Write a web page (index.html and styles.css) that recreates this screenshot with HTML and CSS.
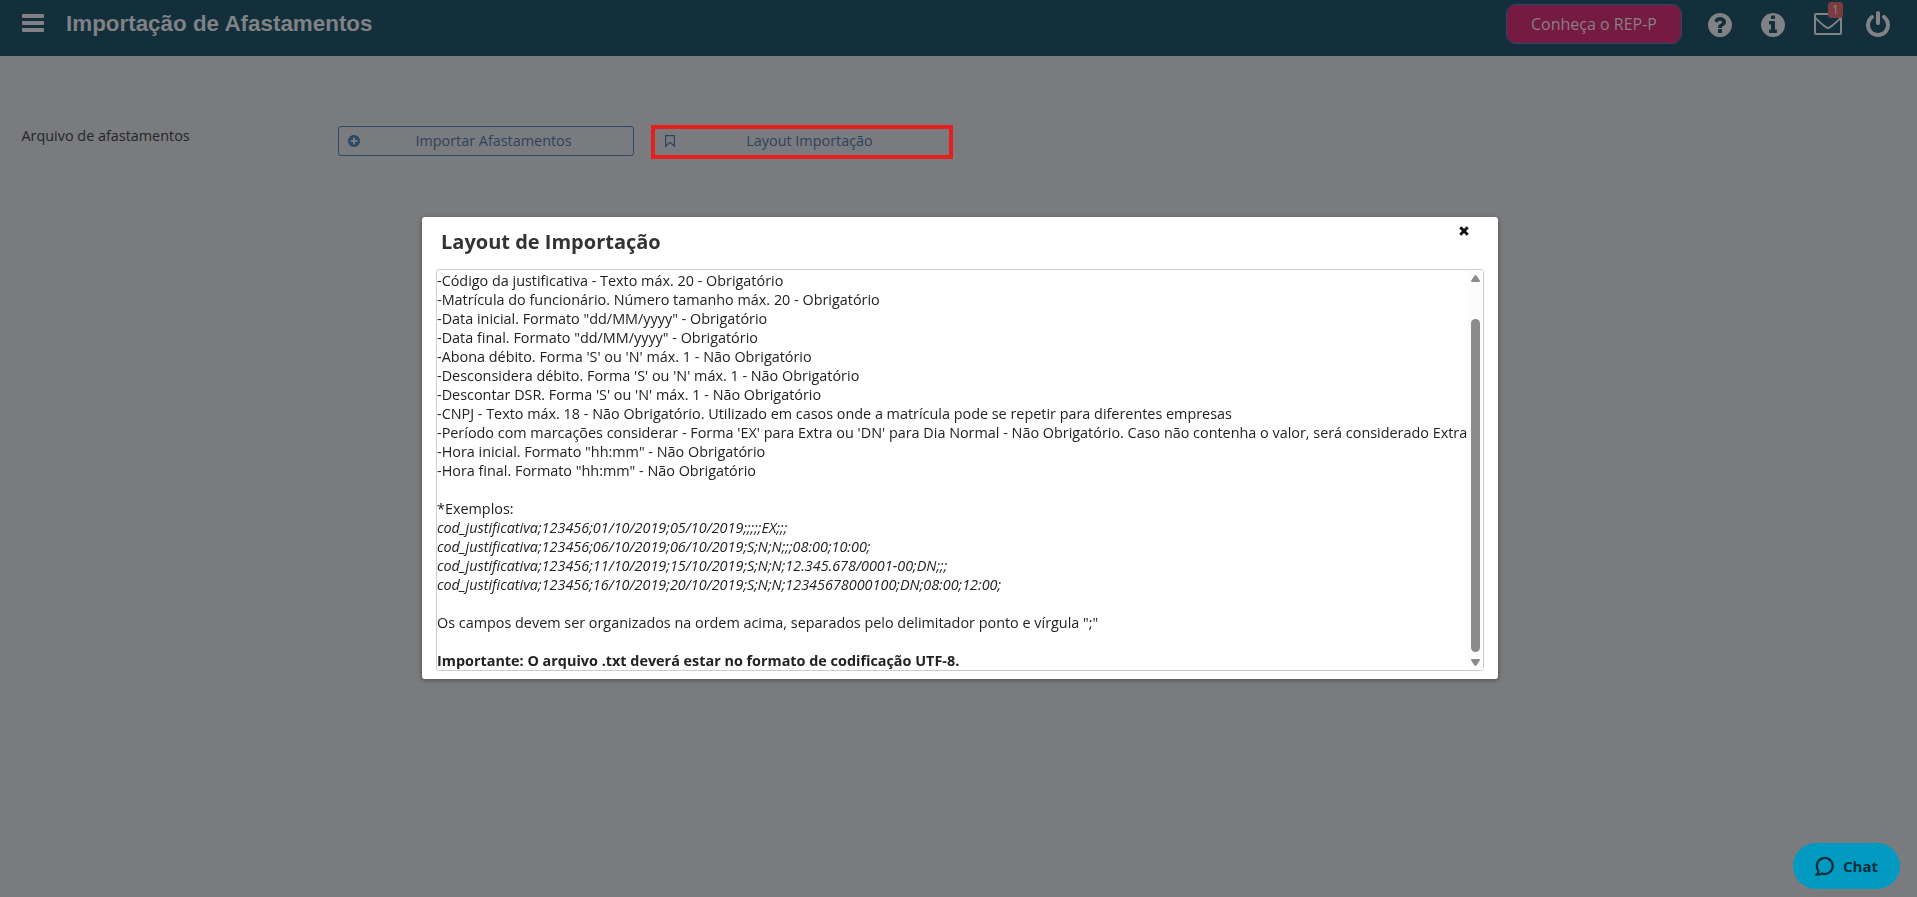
FILE: index.html
```html
<!doctype html>
<html lang="pt-BR">
<head>
  <meta charset="UTF-8">
  <meta name="viewport" content="width=device-width, initial-scale=1.0">
  <title>Importação de Afastamentos</title>
  <link rel="stylesheet" href="styles.css">
</head>
<body>
  <header class="topbar">
    <div class="menu-icon"><span></span><span></span><span></span></div>
    <h1>Importação de Afastamentos</h1>
    <button class="btn-rep">Conheça o REP-P</button>
    <nav class="top-icons">
      <svg class="icon" viewBox="0 0 1792 1792"><path d="M1024 1376v-192q0-14-9-23t-23-9h-192q-14 0-23 9t-9 23v192q0 14 9 23t23 9h192q14 0 23-9t9-23zm256-672q0-88-55.500-163t-138.500-116-170-41q-243 0-371 213-15 24 8 42l132 100q7 6 19 6 16 0 25-12 53-68 86-92 34-24 86-24 48 0 85.500 26t37.500 59q0 38-20 61t-68 45q-63 28-115.500 86.500t-52.500 125.500v36q0 14 9 23t23 9h192q14 0 23-9t9-23q0-19 21.500-49.500t54.500-49.500q32-18 49-28.500t46-35 44.500-48 28-60.500 12.500-81zm384 192q0 209-103 385.500t-279.500 279.500-385.500 103-385.500-103-279.500-279.500-103-385.500 103-385.500 279.500-279.500 385.500-103 385.500 103 279.500 279.500 103 385.500z"/></svg>
      <svg class="icon" viewBox="0 0 1792 1792"><path d="M1152 1376v-160q0-14-9-23t-23-9h-96v-512q0-14-9-23t-23-9h-320q-14 0-23 9t-9 23v160q0 14 9 23t23 9h96v320h-96q-14 0-23 9t-9 23v160q0 14 9 23t23 9h448q14 0 23-9t9-23zm-128-896v-160q0-14-9-23t-23-9h-192q-14 0-23 9t-9 23v160q0 14 9 23t23 9h192q14 0 23-9t9-23zm640 416q0 209-103 385.500t-279.500 279.500-385.500 103-385.500-103-279.500-279.500-103-385.500 103-385.500 279.500-279.500 385.500-103 385.500 103 279.500 279.500 103 385.500z"/></svg>
      <div class="mail">
        <svg viewBox="0 0 28 22"><path d="M2 1h24a1 1 0 0 1 1 1v18a1 1 0 0 1-1 1H2a1 1 0 0 1-1-1V2a1 1 0 0 1 1-1zM1 4.500C3 7 6 9.500 10 12.700C12 14.300 13 15 14 15s2-.7 4-2.300C22 9.500 25 7 27 4.500"/></svg>
        <span class="badge">1</span>
      </div>
      <svg class="icon" viewBox="0 0 1792 1792"><path d="M1664 896q0 156-61 298t-164 245-245 164-298 61-298-61-245-164-164-245-61-298q0-182 80.500-343t226.500-270q43-32 95.500-25t83.500 50q32 42 24.500 94.500t-49.500 84.500q-98 74-151.500 181t-53.500 228q0 104 40.500 198.500t109.500 163.500 163.500 109.500 198.500 40.500 198.500-40.500 163.500-109.500 109.500-163.500 40.500-198.500q0-121-53.500-228t-151.500-181q-42-32-49.500-84.500t24.500-94.500q31-43 84-50t95 25q146 109 226.500 270t80.500 343zm-640-768v640q0 52-38 90t-90 38-90-38-38-90v-640q0-52 38-90t90-38 90 38 38 90z"/></svg>
    </nav>
  </header>

  <main class="content">
    <label class="field-label">Arquivo de afastamentos</label>
    <button class="btn-file">
      <svg viewBox="0 0 1792 1792"><path d="M1344 960v-128q0-26-19-45t-45-19h-256v-256q0-26-19-45t-45-19h-128q-26 0-45 19t-19 45v256h-256q-26 0-45 19t-19 45v128q0 26 19 45t45 19h256v256q0 26 19 45t45 19h128q26 0 45-19t19-45v-256h256q26 0 45-19t19-45zm320-64q0 209-103 385.500t-279.500 279.500-385.500 103-385.500-103-279.500-279.500-103-385.500 103-385.500 279.500-279.500 385.500-103 385.500 103 279.500 279.500 103 385.500z"/></svg>
      <span>Importar Afastamentos</span>
    </button>
    <button class="btn-file btn-layout">
      <svg class="bookmark" viewBox="0 0 10 12"><path d="M.6.6h8.800v10.600L5 7.300.6 11.200z"/></svg>
      <span>Layout Importação</span>
    </button>
  </main>

  <!-- modal -->
  <div class="overlay">
    <section class="dialog">
      <div class="dialog-head">
        <h2>Layout de Importação</h2>
        <svg class="close" viewBox="0 0 10 10"><path d="M1.300 1.300l7.400 7.400M8.700 1.300l-7.400 7.400"/></svg>
      </div>
      <div class="dialog-body">
        <div class="layout-text">
          -Código da justificativa - Texto máx. 20 - Obrigatório<br>
          -Matrícula do funcionário. Número tamanho máx. 20 - Obrigatório<br>
          -Data inicial. Formato "dd/MM/yyyy" - Obrigatório<br>
          -Data final. Formato "dd/MM/yyyy" - Obrigatório<br>
          -Abona débito. Forma 'S' ou 'N' máx. 1 - Não Obrigatório<br>
          -Desconsidera débito. Forma 'S' ou 'N' máx. 1 - Não Obrigatório<br>
          -Descontar DSR. Forma 'S' ou 'N' máx. 1 - Não Obrigatório<br>
          -CNPJ - Texto máx. 18 - Não Obrigatório. Utilizado em casos onde a matrícula pode se repetir para diferentes empresas<br>
          -Período com marcações considerar - Forma 'EX' para Extra ou 'DN' para Dia Normal - Não Obrigatório. Caso não contenha o valor, será considerado Extra<br>
          -Hora inicial. Formato "hh:mm" - Não Obrigatório<br>
          -Hora final. Formato "hh:mm" - Não Obrigatório<br>
          <br>
          *Exemplos:<br>
          <i>cod_justificativa;123456;01/10/2019;05/10/2019;;;;;EX;;;<br>
          cod_justificativa;123456;06/10/2019;06/10/2019;S;N;N;;;08:00;10:00;<br>
          cod_justificativa;123456;11/10/2019;15/10/2019;S;N;N;12.345.678/0001-00;DN;;;<br>
          cod_justificativa;123456;16/10/2019;20/10/2019;S;N;N;12345678000100;DN;08:00;12:00;</i><br>
          <br>
          Os campos devem ser organizados na ordem acima, separados pelo delimitador ponto e vírgula ";"<br>
          <br>
          <b>Importante: O arquivo .txt deverá estar no formato de codificação UTF-8.</b>
        </div>
        <div class="scrollbar">
          <svg viewBox="0 0 9 7"><path d="M4.500 0Q5.200 0 5.600.7L8.800 5.500Q9.300 7 8 7H1Q-.3 7 .2 5.500L3.400.7Q3.800 0 4.500 0z"/></svg>
          <div class="thumb"></div>
          <svg viewBox="0 0 9 7"><path d="M4.500 7Q5.200 7 5.600 6.300L8.800 1.500Q9.300 0 8 0H1Q-.3 0 .2 1.500L3.400 6.300Q3.800 7 4.500 7z"/></svg>
        </div>
      </div>
    </section>
  </div>

  <button class="chat">
    <svg viewBox="0 0 20 20"><path d="M3.300 14.700A8 8 0 1 1 7.300 17.600Q4.500 18.900 1.800 18.600Q3.500 17 3.300 14.700z"/></svg>
    <span>Chat</span>
  </button>
</body>
</html>
```
FILE: styles.css
```css
* {
    box-sizing: border-box;
}
body {
    margin: 0;
    height: 897px;
    overflow: hidden;
    background: #7a7b7e;
    font-family: "Open Sans", sans-serif;
    font-size: 14.4px;
    color: #222;
}
button {
    font-family: inherit;
    cursor: pointer;
}
.topbar {
    display: flex;
    align-items: flex-start;
    height: 56px;
    padding: 0 25px 0 22px;
    background: #142f3c;
}
.menu-icon {
    display: flex;
    flex-direction: column;
    gap: 3px;
    width: 22px;
    margin-top: 14px;
}
.menu-icon span {
    height: 4px;
    border-radius: 1px;
    background: #808285;
}
.topbar h1 {
    margin: 11px 0 0 22px;
    font: bold 22.4px/25px "Liberation Sans", Arial, sans-serif;
    color: #808285;
}
.btn-rep {
    width: 176px;
    height: 40px;
    margin: 4px 0 0 auto;
    padding: 0;
    border: 1px solid #274a6b;
    border-radius: 10px;
    background: #751a40;
    color: #8b7e86;
    font-size: 16px;
}
.top-icons {
    display: flex;
    margin: 11px 0 0 24px;
}
.icon {
    width: 28px;
    height: 28px;
    fill: #808285;
}
.icon + .icon {
    margin-left: 25px;
}
.mail {
    position: relative;
    width: 28px;
    height: 22px;
    margin: 2px 22px 0 27px;
}
.mail svg {
    display: block;
    fill: none;
    stroke: #808285;
    stroke-width: 2;
}
.badge {
    position: absolute;
    left: 14px;
    top: -11px;
    width: 15px;
    height: 16px;
    border-radius: 3px;
    background: #7b3c40;
    color: #8b8587;
    font-size: 12px;
    line-height: 15px;
    text-align: center;
}
.content {
    display: flex;
    align-items: flex-start;
    padding: 69px 22px 0;
}
.field-label {
    width: 316px;
    padding-top: 1px;
    line-height: 20px;
    text-indent: -0.5px;
    color: #252629;
}
.btn-file {
    display: flex;
    align-items: center;
    width: 296px;
    height: 30px;
    margin-top: 1px;
    padding: 0 7px 1px 8px;
    border: 1px solid #2b4a67;
    border-radius: 3px;
    background: none;
    color: #2d435d;
    font-size: 14.4px;
}
.btn-file svg {
    width: 14px;
    height: 14px;
    fill: #2b4a67;
}
.btn-file span {
    flex: 1;
    text-align: center;
}
.btn-file .bookmark {
    width: 10px;
    height: 12px;
    fill: none;
    stroke: #2d435d;
    stroke-width: 1.2;
}
.btn-layout {
    width: 302px;
    height: 34px;
    margin: 0 0 0 17px;
    padding: 0 5px 3px 10px;
    border: 4px solid #e61e1e;
    border-radius: 0;
}
.overlay {
    position: fixed;
    inset: 0;
    display: flex;
    justify-content: center;
    align-items: flex-start;
    padding: 217px 0 0 3px;
}
.dialog {
    width: 1076px;
    height: 462px;
    padding: 0 14px;
    border-radius: 3px;
    background: #fff;
    box-shadow: 0 1px 5px rgba(0, 0, 0, 0.4);
}
.dialog-head {
    display: flex;
    justify-content: space-between;
    height: 52px;
    padding: 9px 15px 0 5px;
}
.dialog-head h2 {
    margin: 0;
    font-size: 20px;
    line-height: 31px;
    color: #333;
}
.close {
    width: 10px;
    height: 10px;
    fill: none;
    stroke: #111;
    stroke-width: 3;
}
.dialog-body {
    display: flex;
    height: 402px;
    border: 1px solid #ccc;
    border-radius: 3px;
}
.layout-text {
    flex: 1;
    padding-top: 1px;
    line-height: 19px;
    white-space: nowrap;
    color: #222;
    overflow: hidden;
}
.scrollbar {
    display: flex;
    flex-direction: column;
    align-items: center;
    width: 15px;
    padding: 5px 0 4px;
    background: #fcfcfc;
}
.scrollbar svg {
    width: 9px;
    height: 7px;
    fill: #8b8b8b;
}
.thumb {
    flex: 1;
    width: 9px;
    margin: 37px 0 7px;
    border-radius: 5px;
    background: #8b8b8b;
}
.chat {
    position: fixed;
    right: 17px;
    bottom: 8px;
    display: flex;
    align-items: center;
    gap: 8px;
    width: 107px;
    height: 46px;
    padding: 0 0 0 22px;
    border: 0;
    border-radius: 23px;
    background: #039ac2;
    color: #0b2e3b;
    font-size: 15px;
    font-weight: bold;
}
.chat svg {
    width: 20px;
    height: 20px;
    fill: none;
    stroke: #0b2e3b;
    stroke-width: 2.2;
}
```
